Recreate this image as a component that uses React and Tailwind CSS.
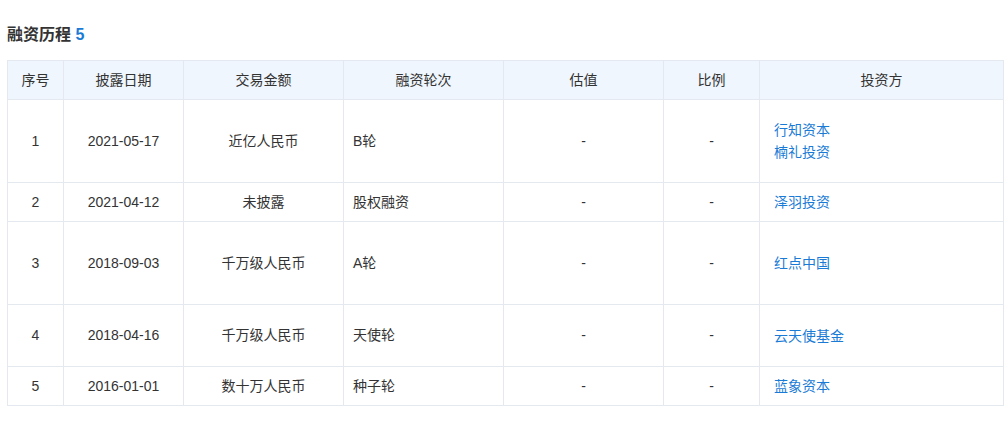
const rows = [
  { no: 1, date: "2021-05-17", amount: "近亿人民币", round: "B轮", investors: ["行知资本", "楠礼投资"], h: "h-[83px]" },
  { no: 2, date: "2021-04-12", amount: "未披露", round: "股权融资", investors: ["泽羽投资"], h: "h-[39px]" },
  { no: 3, date: "2018-09-03", amount: "千万级人民币", round: "A轮", investors: ["红点中国"], h: "h-[83px]" },
  { no: 4, date: "2018-04-16", amount: "千万级人民币", round: "天使轮", investors: ["云天使基金"], h: "h-[62px]" },
  { no: 5, date: "2016-01-01", amount: "数十万人民币", round: "种子轮", investors: ["蓝象资本"], h: "h-[39px]" },
];

const heads = ["序号", "披露日期", "交易金额", "融资轮次", "估值", "比例", "投资方"];

export default function App() {
  return (
    <div className="w-[1004px] h-[423px] bg-white px-[7px] pt-[25px] font-['Liberation_Sans','Noto_Sans_CJK_SC',sans-serif] text-[14px] text-[#333]">
      <h2 className="text-[16px] font-bold leading-[20px] text-[#333]">
        融资历程 <span className="text-[#1a7bd6]">5</span>
      </h2>
      <table className="mt-[15px] w-[997px] table-fixed border-collapse">
        <colgroup>
          <col className="w-[56px]" />
          <col className="w-[120px]" />
          <col className="w-[160px]" />
          <col className="w-[160px]" />
          <col className="w-[160px]" />
          <col className="w-[96px]" />
          <col />
        </colgroup>
        <thead>
          <tr className="h-[39px] bg-[#eff6fd]">
            {heads.map((t) => (
              <th key={t} className="border border-[#e3e9ef] font-normal text-center">
                {t}
              </th>
            ))}
          </tr>
        </thead>
        <tbody>
          {rows.map((r) => (
            <tr key={r.no} className={r.h}>
              <td className="border border-[#e3e9ef] text-center">{r.no}</td>
              <td className="border border-[#e3e9ef] text-center">{r.date}</td>
              <td className="border border-[#e3e9ef] text-center">{r.amount}</td>
              <td className="border border-[#e3e9ef] pl-[9px]">{r.round}</td>
              <td className="border border-[#e3e9ef] text-center">-</td>
              <td className="border border-[#e3e9ef] text-center">-</td>
              <td className="border border-[#e3e9ef] pl-[14px] leading-[22px] text-[#1a7bd6]">
                {r.investors.map((n) => (
                  <div key={n}>{n}</div>
                ))}
              </td>
            </tr>
          ))}
        </tbody>
      </table>
    </div>
  );
}
